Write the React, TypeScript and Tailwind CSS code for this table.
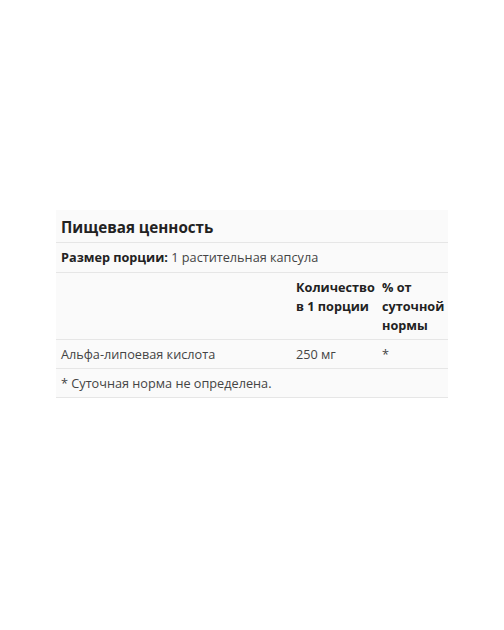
export default function App() {
  const font = { fontFamily: '"Open Sans", "Noto Sans", sans-serif' };

  return (
    <div className="w-[504px] h-[630px] bg-white pt-[210px]" style={font}>
      <div className="ml-[56px] w-[392px] bg-[#fafafa] text-[#333] text-[12.7px] leading-[19px]">
        {/* Title */}
        <div className="px-[5px] h-[33px] flex items-center pt-[2px] border-b border-[#e6e6e6]">
          <h2 className="text-[15.2px] font-bold text-[#222] leading-[22px]">Пищевая ценность</h2>
        </div>

        {/* Serving size */}
        <div className="px-[5px] h-[30px] flex items-center border-b border-[#e6e6e6]">
          <p>
            <span className="font-bold text-[#222]">Размер порции:</span>{' '}
            <span className="text-[#444]">1 растительная капсула</span>
          </p>
        </div>

        {/* Header */}
        <div className="px-[5px] grid grid-cols-[235px_86px_1fr] pt-[5px] pb-[4px] border-b border-[#e6e6e6] font-bold text-[#222]">
          <div></div>
          <div>Количество<br />в 1 порции</div>
          <div>% от<br />суточной<br />нормы</div>
        </div>

        {/* Row */}
        <div className="px-[5px] grid grid-cols-[235px_86px_1fr] h-[29px] items-center border-b border-[#e6e6e6] text-[#444]">
          <div>Альфа-липоевая кислота</div>
          <div>250 мг</div>
          <div>*</div>
        </div>

        {/* Footnote */}
        <div className="px-[5px] h-[29px] flex items-center border-b border-[#e6e6e6] text-[#444]">
          * Суточная норма не определена.
        </div>
      </div>
    </div>
  );
}
